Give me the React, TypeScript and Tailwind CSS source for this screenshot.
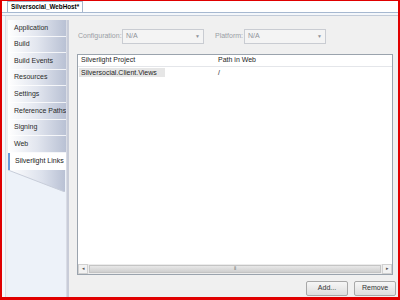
import React from "react";

const navItems = [
  "Application",
  "Build",
  "Build Events",
  "Resources",
  "Settings",
  "Reference Paths",
  "Signing",
  "Web",
];

function Dropdown() {
  return (
    <div className="w-[82px] h-[15px] border border-[#c9ccd2] bg-[#f4f4f4] flex items-center justify-between px-[3px] text-[#8f9399]">
      <span>N/A</span>
      <span className="text-[5px]">▼</span>
    </div>
  );
}

export default function App() {
  return (
    <div
      className="w-[400px] h-[300px] overflow-hidden bg-white border-t border-l-2 border-r-2 border-b-[3px] border-[#e00000] flex flex-col text-[7px] text-[#1e1e1e] whitespace-nowrap"
      style={{ fontFamily: '"Liberation Sans", Arial, sans-serif' }}
    >
      {/* tab strip */}
      <div className="h-[11px] flex items-end pl-[5px] bg-white">
        <div className="h-[11px] px-[3px] border border-b-0 border-[#a6b5c9] bg-white font-bold text-[6.3px] leading-[10px] text-black">
          Silversocial_WebHost*
        </div>
      </div>
      <div className="h-px bg-[#a6b8d0]" />
      <div className="h-[2px] bg-[#f4f7fb]" />
      <div className="h-px bg-[#c2cbd8]" />
      <div className="flex-1 flex pl-[3px] bg-[#f7f8fa]">
        <div className="flex-1 flex border-l border-[#d8dde5] pt-[4px] bg-[#f0f0f0]">
          {/* nav */}
          <div className="w-[63px] flex flex-col pl-[2px] bg-[#f0f0f0]">
            <div className="flex-1 flex">
              <div className="flex-1 flex flex-col bg-[#edf2f9]">
                <div className="flex flex-col bg-gradient-to-r from-white via-[#e2e6ef] to-[#b9c1d4]">
                  {navItems.map((n) => (
                    <div
                      key={n}
                      className="h-[16.6px] flex items-center pl-[6px] border-b border-white/80 text-[#2a2a2a]"
                    >
                      {n}
                    </div>
                  ))}
                </div>
                <div className="h-[17px] flex items-center pl-[5px] bg-white border-l-2 border-[#6a9bd8] text-[#1a1a1a]">
                  Silverlight Links
                </div>
                <svg width="57" height="22" className="block">
                  <defs>
                    <linearGradient id="g" x1="0" x2="1" y1="0" y2="0">
                      <stop offset="0" stopColor="#ffffff" />
                      <stop offset="0.6" stopColor="#dce1ec" />
                      <stop offset="1" stopColor="#b9c1d4" />
                    </linearGradient>
                  </defs>
                  <polygon points="0,0 57,0 57,22 0,0" fill="url(#g)" />
                  <line x1="0" y1="0" x2="57" y2="22" stroke="#c7cdd9" strokeWidth="1" />
                </svg>
                <div className="flex-1" />
              </div>
              <div className="w-[4px] bg-[#c8ccd8] border-l border-[#d9dce5]" />
            </div>
          </div>
          {/* content */}
          <div className="flex-1 flex flex-col pl-[8px] pr-[2px] pt-[9px] pb-px bg-[#f0f0f0]">
            <div className="flex items-center h-[15px] text-[#9a9ea5]">
              <span className="w-[45px] pl-px">Configuration:</span>
              <Dropdown />
              <span className="ml-[11px] w-[29px]">Platform:</span>
              <Dropdown />
            </div>
            <div className="mt-[10px] mr-[3px] flex-1 flex flex-col border border-[#9aa3ad] bg-white">
              <div className="h-[12px] flex items-center border-b border-[#e4e6ea] bg-white">
                <span className="w-[140px] pl-[3px]">Silverlight Project</span>
                <span>Path in Web</span>
              </div>
              <div className="h-[12px] flex items-center">
                <span className="w-[140px] pl-[1px]">
                  <span className="bg-[#e6e6e6] pl-[2px] pr-[8px] py-[1px]">Silversocial.Client.Views</span>
                </span>
                <span>/</span>
              </div>
              <div className="flex-1" />
              <div className="h-[10px] flex items-stretch bg-[#ececec]">
                <div className="w-[10px] bg-[#f2f2f2] border border-[#d0d0d0] flex items-center justify-center text-[5px] text-[#555]">◂</div>
                <div className="flex-1 mx-px my-px bg-gradient-to-b from-[#e8e8e8] to-[#cfcfcf] border border-[#c4c4c4] flex items-center justify-center text-[5px] text-[#777]">
                  ⦀
                </div>
                <div className="w-[10px] bg-[#f2f2f2] border border-[#d0d0d0] flex items-center justify-center text-[5px] text-[#555]">▸</div>
              </div>
            </div>
            <div className="mt-[6px] h-[15px] flex items-center justify-end gap-[6px]">
              <button className="w-[42px] h-[15px] border border-[#a8a8a8] rounded-[2px] bg-gradient-to-b from-[#f6f6f6] to-[#dedede] text-[7px] text-[#333]">
                Add...
              </button>
              <button className="w-[42px] h-[15px] border border-[#a8a8a8] rounded-[2px] bg-gradient-to-b from-[#f6f6f6] to-[#dedede] text-[7px] text-[#333]">
                Remove
              </button>
            </div>
          </div>
        </div>
      </div>
    </div>
  );
}
